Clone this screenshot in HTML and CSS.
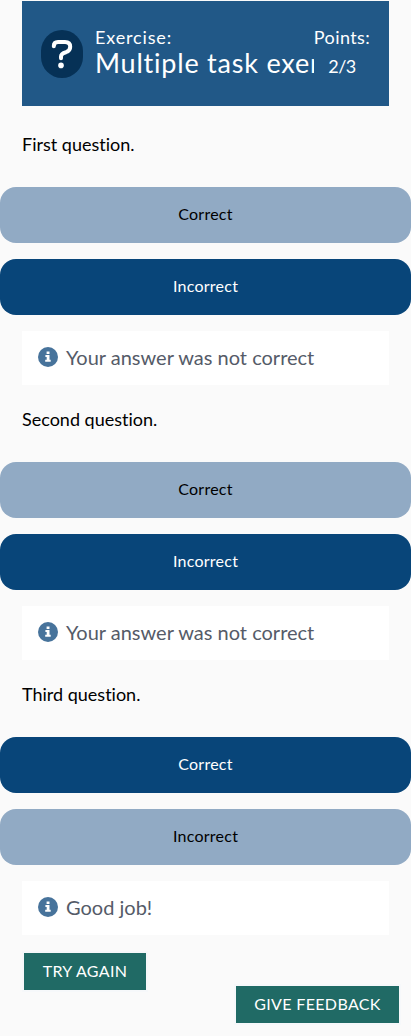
FILE: index.html
```html
<!DOCTYPE html>
<html lang="en">
<head>
<meta charset="utf-8">
<meta name="viewport" content="width=device-width, initial-scale=1">
<title>Exercise</title>
<link rel="stylesheet" href="styles.css">
</head>
<body>
<main class="exercise">
  <header class="header">
    <svg class="badge" width="42" height="48" viewBox="0 0 42 48" aria-hidden="true">
      <rect width="42" height="48" rx="21" ry="21" fill="#063156"/>
      <path d="M12.8 16.3 Q12.8 12 17 12 H24 Q29.2 12 29.2 16.8 Q29.2 21 25 22.2 Q20 23.5 20 26.5 V28.2" fill="none" stroke="#fff" stroke-width="4" stroke-linecap="round" stroke-linejoin="round"/>
      <circle cx="20" cy="35.4" r="2.8" fill="#fff"/>
    </svg>
    <div class="heading">
      <div class="kicker">Exercise:</div>
      <h1 class="title">Multiple task exercise</h1>
    </div>
    <div class="points"><span class="label">Points:</span><span class="score">2/3</span></div>
  </header>

  <section class="task">
    <p class="question">First question.</p>
    <button class="option">Correct</button>
    <button class="option selected">Incorrect</button>
    <div class="feedback">
      <svg class="info" width="20" height="20" viewBox="0 0 20 20"><circle cx="10" cy="10" r="10" fill="#47739b"/><path d="M8.6 4.5h2.9v2.4H8.6zM7.4 8.1h4.1v4.7h1.2v2H7.2v-2h1.5v-2.7H7.4z" fill="#fff"/></svg>
      <span>Your answer was not correct</span>
    </div>
  </section>

  <section class="task">
    <p class="question">Second question.</p>
    <button class="option">Correct</button>
    <button class="option selected">Incorrect</button>
    <div class="feedback">
      <svg class="info" width="20" height="20" viewBox="0 0 20 20"><circle cx="10" cy="10" r="10" fill="#47739b"/><path d="M8.6 4.5h2.9v2.4H8.6zM7.4 8.1h4.1v4.7h1.2v2H7.2v-2h1.5v-2.7H7.4z" fill="#fff"/></svg>
      <span>Your answer was not correct</span>
    </div>
  </section>

  <section class="task">
    <p class="question">Third question.</p>
    <button class="option selected">Correct</button>
    <button class="option">Incorrect</button>
    <div class="feedback">
      <svg class="info" width="20" height="20" viewBox="0 0 20 20"><circle cx="10" cy="10" r="10" fill="#47739b"/><path d="M8.6 4.5h2.9v2.4H8.6zM7.4 8.1h4.1v4.7h1.2v2H7.2v-2h1.5v-2.7H7.4z" fill="#fff"/></svg>
      <span>Good job!</span>
    </div>
  </section>

  <footer class="actions">
    <button class="action retry">TRY AGAIN</button>
    <button class="action give">GIVE FEEDBACK</button>
  </footer>
</main>
</body>
</html>
```
FILE: styles.css
```css
* { box-sizing: border-box; }
body {
  margin: 0;
  background: #fafafa;
  color: #000;
  font-family: Lato, sans-serif;
  font-variant-ligatures: none;
}
.exercise { padding-top: 1px; height: 1036px; }
.header {
  display: flex;
  height: 105px;
  margin: 0 22px;
  padding: 0 19px;
  background: #215887;
  color: #fff;
}
.badge { flex: none; margin-top: 29px; }
.heading {
  flex: none;
  width: 219px;
  margin-left: 12px;
  padding-top: 24px;
  overflow: hidden;
}
.kicker { font-size: 18px; line-height: 24px; letter-spacing: 0.85px; }
.title {
  margin: 0;
  font-size: 27px;
  line-height: 28px;
  height: 36px;
  font-weight: 400;
  letter-spacing: 0.78px;
  white-space: nowrap;
}
.points {
  display: flex;
  flex: none;
  flex-direction: column;
  align-items: center;
  width: 56px;
  padding-top: 22px;
  font-size: 18px;
  line-height: 29px;
  letter-spacing: 0.4px;
}
.score { letter-spacing: -0.5px; }
.task { display: flex; flex-direction: column; }
.question {
  margin: 0;
  height: 81px;
  padding: 25px 22px 0;
  font-size: 18px;
  line-height: 27px;
}
.option {
  height: 56px;
  margin: 0 0 16px;
  padding: 0 0 2px;
  border: 0;
  border-radius: 16px;
  background: #91aac4;
  color: #000;
  font: 16px/24px Lato, sans-serif;
  letter-spacing: 0.25px;
}
.option.selected { background: #084579; color: #fff; }
.feedback {
  display: flex;
  gap: 8px;
  height: 54px;
  margin: 0 22px;
  padding: 11px 16px;
  background: #fff;
  color: #555b68;
  font-size: 20px;
  line-height: 30px;
}
.info { flex: none; margin-top: 5px; }
.task + .task .question { height: 77px; padding-top: 21px; }
.actions { display: flex; flex-direction: column; }
.action {
  padding: 0 0 2px;
  height: 41px;
  border: 2px solid #f6f8fa;
  background: #206a65;
  color: #fff;
  font: 16px/24px Lato, sans-serif;
  letter-spacing: 0.35px;
}
.retry { width: 126px; margin: 16px 0 0 22px; }
.give { align-self: flex-end; width: 167px; margin: -8px 10px 0 0; }
```
